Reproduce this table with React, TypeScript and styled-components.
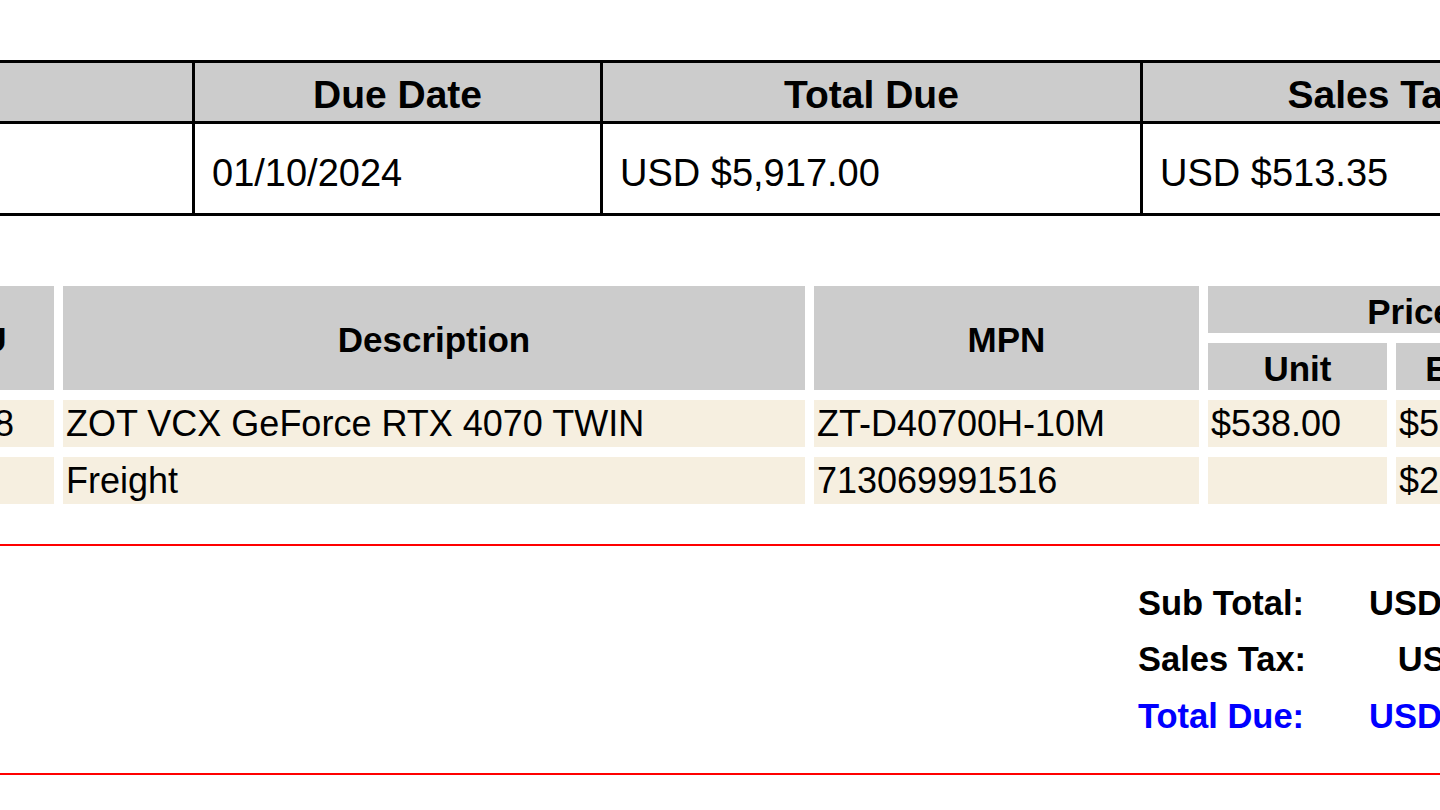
import React from 'react';
import styled, { createGlobalStyle } from 'styled-components';

const GlobalStyle = createGlobalStyle`
  * {
    box-sizing: border-box;
  }
  html,
  body {
    margin: 0;
    padding: 0;
    background: #ffffff;
    overflow: hidden;
  }
  body {
    font-family: "Liberation Sans", Arial, sans-serif;
    color: #000000;
  }
`;

const Viewport = styled.div`
  width: 1440px;
  height: 810px;
  overflow: hidden;
`;

// the invoice is wider than the window, the crop starts left of its edge
const Sheet = styled.div`
  width: 1727px;
  margin-left: -115px;
  padding-top: 60px;
`;

const Summary = styled.div`
  display: grid;
  grid-template-columns: 304px 408px 540px 469px;
  border: 3px solid #000000;
`;

const SummaryHead = styled.div<{ $first?: boolean }>`
  height: 61px;
  padding-top: 6px;
  background: #cccccc;
  border-bottom: 3px solid #000000;
  border-left: ${(p) => (p.$first ? 'none' : '3px solid #000000')};
  display: flex;
  align-items: center;
  justify-content: center;
  font-size: 39px;
  font-weight: 700;
`;

const SummaryCell = styled.div<{ $first?: boolean }>`
  height: 89px;
  padding: 9px 0 0 17px;
  border-left: ${(p) => (p.$first ? 'none' : '3px solid #000000')};
  display: flex;
  align-items: center;
  font-size: 38px;
`;

const Items = styled.div`
  margin-top: 70px;
  display: grid;
  grid-template-columns: 169px 742px 385px 179px 216px;
  grid-auto-rows: 47px;
  column-gap: 9px;
  row-gap: 10px;
`;

const ItemHead = styled.div<{ $rows?: number; $cols?: number }>`
  grid-row: span ${(p) => p.$rows || 1};
  grid-column: span ${(p) => p.$cols || 1};
  padding-top: 4px;
  background: #cccccc;
  display: flex;
  align-items: center;
  justify-content: center;
  font-size: 35px;
  font-weight: 700;
`;

const ItemCell = styled.div<{ $pad?: number }>`
  background: #f6efe0;
  display: flex;
  align-items: center;
  padding-left: ${(p) => p.$pad ?? 3}px;
  font-size: 36px;
  white-space: nowrap;
  overflow: hidden;
`;

const Totals = styled.div`
  margin-top: 40px;
  padding: 29px 7px 28px 0;
  border-top: 2px solid #ff0000;
  border-bottom: 2px solid #ff0000;
  display: grid;
  grid-template-columns: auto auto;
  grid-auto-rows: 56.5px;
  justify-content: end;
  column-gap: 63px;
  align-items: center;
  font-size: 34.5px;
  font-weight: 700;
`;

const TotalLabel = styled.div<{ $accent?: boolean }>`
  color: ${(p) => (p.$accent ? '#0000ff' : '#000000')};
`;

const TotalValue = styled.div<{ $accent?: boolean }>`
  text-align: right;
  color: ${(p) => (p.$accent ? '#0000ff' : '#000000')};
`;

const lines = [
  { sku: '455878', description: 'ZOT VCX GeForce RTX 4070 TWIN', mpn: 'ZT-D40700H-10M', unit: '$538.00', extended: '$5,380.00' },
  { sku: '', description: 'Freight', mpn: '713069991516', unit: '', extended: '$23.65' },
];

const totals = [
  { label: 'Sub Total:', value: 'USD $5,403.65' },
  { label: 'Sales Tax:', value: 'USD $513.35' },
  { label: 'Total Due:', value: 'USD $5,917.00', accent: true },
];

function App() {
  return (
    <Viewport>
      <GlobalStyle />
      <Sheet>
        <Summary>
          <SummaryHead $first />
          <SummaryHead>Due Date</SummaryHead>
          <SummaryHead>Total Due</SummaryHead>
          <SummaryHead>Sales Tax</SummaryHead>
          <SummaryCell $first />
          <SummaryCell>01/10/2024</SummaryCell>
          <SummaryCell>USD $5,917.00</SummaryCell>
          <SummaryCell>USD $513.35</SummaryCell>
        </Summary>

        <Items>
          <ItemHead $rows={2}>SKU</ItemHead>
          <ItemHead $rows={2}>Description</ItemHead>
          <ItemHead $rows={2}>MPN</ItemHead>
          <ItemHead $cols={2}>Price</ItemHead>
          <ItemHead>Unit</ItemHead>
          <ItemHead>Extended</ItemHead>
          {lines.map((line) => (
            <React.Fragment key={line.mpn}>
              <ItemCell $pad={9}>{line.sku}</ItemCell>
              <ItemCell>{line.description}</ItemCell>
              <ItemCell>{line.mpn}</ItemCell>
              <ItemCell>{line.unit}</ItemCell>
              <ItemCell>{line.extended}</ItemCell>
            </React.Fragment>
          ))}
        </Items>

        <Totals>
          {totals.map((row) => (
            <React.Fragment key={row.label}>
              <TotalLabel $accent={row.accent}>{row.label}</TotalLabel>
              <TotalValue $accent={row.accent}>{row.value}</TotalValue>
            </React.Fragment>
          ))}
        </Totals>
      </Sheet>
    </Viewport>
  );
}

export default App;
